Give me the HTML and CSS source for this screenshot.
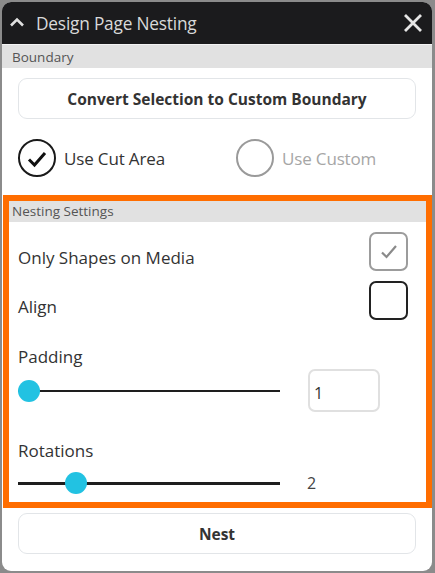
FILE: index.html
```html
<!DOCTYPE html>
<html>
<head>
<meta charset="utf-8">
<link rel="stylesheet" href="styles.css">
</head>
<body>
<div class="panel">
  <div class="titlebar">
    <svg class="chev" width="16" height="10" viewBox="0 0 16 10"><path d="M2 8.5 L8 2.5 L14 8.5" fill="none" stroke="#e0e0e0" stroke-width="2.6"/></svg>
    <span class="title">Design Page Nesting</span>
    <svg class="close" width="20" height="20" viewBox="0 0 20 20"><path d="M2 2 L18 18 M18 2 L2 18" stroke="#e6e6e6" stroke-width="2.8"/></svg>
  </div>
  <div class="section-head">Boundary</div>
  <div class="btn btn-convert">Convert Selection to Custom Boundary</div>
  <div class="radios">
    <div class="radio">
      <span class="circle on"><svg width="22" height="18" viewBox="0 0 22 18"><path d="M3 9.5 L8.5 15 L19 3" fill="none" stroke="#111" stroke-width="3"/></svg></span>
      <span class="rlabel">Use Cut Area</span>
    </div>
    <div class="radio off">
      <span class="circle"></span>
      <span class="rlabel">Use Custom</span>
    </div>
  </div>
  <div class="nesting">
    <div class="section-head inner">Nesting Settings</div>
    <div class="row first">
      <span class="label">Only Shapes on Media</span>
      <span class="check disabled"><svg width="20" height="18" viewBox="0 0 20 18"><path d="M3 9.5 L7.5 14 L17 3" fill="none" stroke="#8a8a8a" stroke-width="2.2"/></svg></span>
    </div>
    <div class="row">
      <span class="label">Align</span>
      <span class="check"></span>
    </div>
    <div class="flabel pad">Padding</div>
    <div class="slider-row">
      <div class="slider"><span class="track"></span><span class="thumb" style="left:0px"></span></div>
      <div class="numbox">1</div>
    </div>
    <div class="flabel rot">Rotations</div>
    <div class="slider-row rot-row">
      <div class="slider"><span class="track"></span><span class="thumb" style="left:47px"></span></div>
      <div class="numval">2</div>
    </div>
  </div>
  <div class="btn btn-nest">Nest</div>
</div>
</body>
</html>
```
FILE: styles.css
```css
* { box-sizing: border-box; }
html, body { margin: 0; padding: 0; }
body {
  width: 435px;
  height: 573px;
  background: #8b8b8b;
  font-family: "Open Sans", "Noto Sans", sans-serif;
  overflow: hidden;
}
.panel {
  margin: 2px 0 0 2px;
  width: 430px;
  height: 569px;
  background: #fff;
  border-radius: 9px;
  overflow: hidden;
  display: flex;
  flex-direction: column;
}
.panel > * { flex: none; }
.titlebar {
  height: 42px;
  background: #1b1b1d;
  display: flex;
  align-items: center;
  padding-left: 7px;
  padding-right: 9px;
}
.chev { flex: none; margin-top: -2px; }
.title {
  color: #d9d9d9;
  font-size: 17.3px;
  margin-left: 11px;
  flex: 1;
  letter-spacing: -0.2px;
}
.close { flex: none; }
.section-head {
  height: 24px;
  background: #e1e1e1;
  color: #555;
  font-size: 13.5px;
  line-height: 24px;
  padding-left: 10px;
  border-top: 1px solid #f4f4f4;
}
.btn {
  margin-left: 16px;
  width: 398px;
  height: 41px;
  border: 1.5px solid #e2e5e8;
  border-radius: 9px;
  display: flex;
  align-items: center;
  justify-content: center;
  font-weight: 700;
  color: #333;
  font-size: 15.5px;
}
.btn-convert { margin-top: 10px; }
.radios {
  margin-top: 20px;
  display: flex;
  height: 38px;
  padding-left: 16px;
}
.radio { display: flex; align-items: center; }
.radio.off { margin-left: 71px; }
.circle {
  width: 38px;
  height: 38px;
  border-radius: 50%;
  border: 2.5px solid #9a9a9a;
  display: flex;
  align-items: center;
  justify-content: center;
}
.circle.on { border-color: #1a1a1a; }
.circle.on svg { margin-top: 1px; }
.rlabel {
  margin-left: 8px;
  font-size: 17px;
  color: #333;
  letter-spacing: -0.15px;
}
.radio.off .rlabel { color: #a6a6a6; }
.nesting {
  margin-top: 18px;
  margin-left: 1px;
  width: 429px;
  height: 313px;
  border: 6px solid #ff6d00;
  display: flex;
  flex-direction: column;
}
.nesting > * { flex: none; }
.section-head.inner {
  height: 21px;
  line-height: 21px;
  padding-left: 3px;
  font-size: 13.5px;
  border-top: none;
}
.row {
  margin-top: 10px;
  height: 39px;
  display: flex;
  align-items: center;
  justify-content: space-between;
  padding-left: 9px;
  padding-right: 18px;
}
.label, .flabel {
  font-size: 17px;
  color: #333;
}
.label { padding-top: 11px; }
.check {
  width: 39px;
  height: 39px;
  border: 2.5px solid #222;
  border-radius: 7px;
  display: flex;
  align-items: center;
  justify-content: center;
}
.check.disabled { border-color: #9c9c9c; }
.flabel {
  padding-left: 9px;
  height: 24px;
  line-height: 24px;
}
.flabel.pad { margin-top: 25px; }
.flabel.rot { margin-top: 27px; }
.slider-row {
  height: 43px;
  display: flex;
  align-items: center;
  padding-left: 9px;
}
.rot-row { height: 40px; }
.slider {
  position: relative;
  width: 262px;
  height: 22px;
}
.track {
  position: absolute;
  left: 0;
  right: 0;
  top: 10px;
  height: 2.5px;
  background: #1e1e1e;
}
.thumb {
  position: absolute;
  top: 0;
  width: 22px;
  height: 22px;
  border-radius: 50%;
  background: #22c2e2;
}
.numbox {
  margin-left: 28px;
  width: 72px;
  height: 43px;
  border: 2px solid #e0e0e0;
  border-radius: 7px;
  font-size: 16px;
  color: #333;
  display: flex;
  align-items: center;
  padding-left: 4px;
  padding-top: 4px;
}
.numval {
  margin-left: 27px;
  font-size: 16px;
  color: #444;
}
.btn-nest { margin-top: 5px; }
```
